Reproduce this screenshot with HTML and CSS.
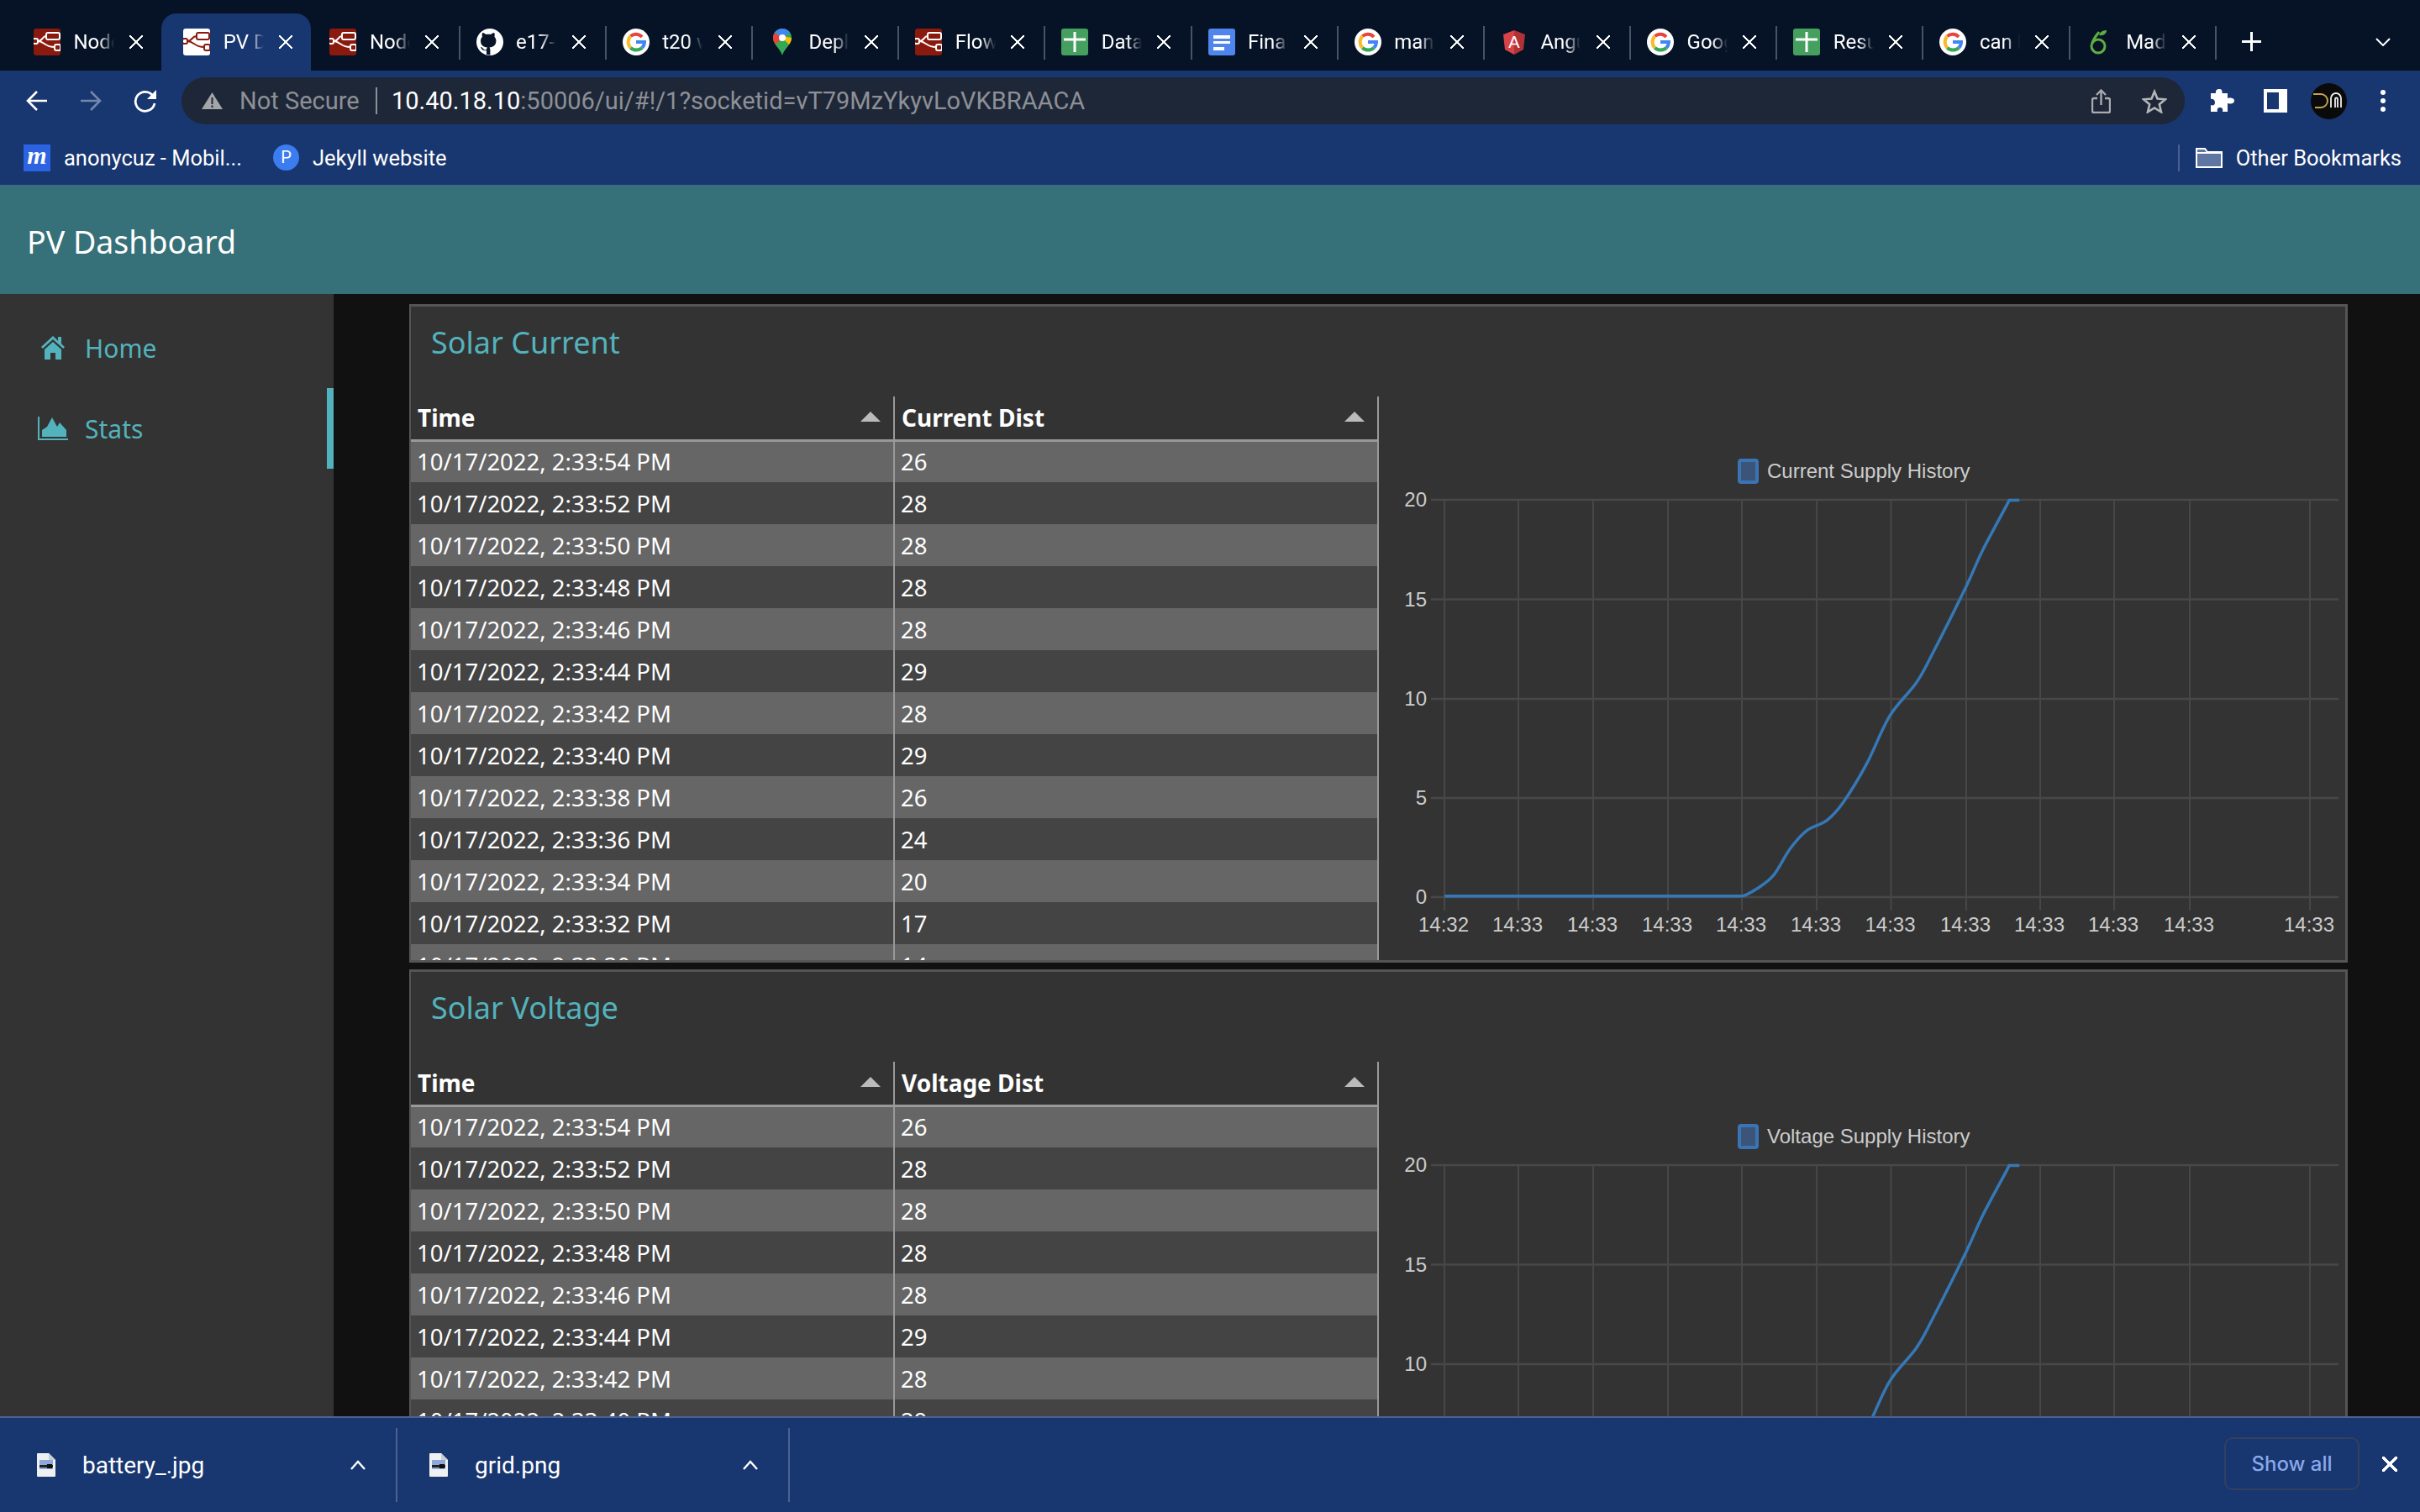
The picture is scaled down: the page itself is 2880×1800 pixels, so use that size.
FILE: index.html
```html
<!DOCTYPE html>
<html lang="en">
<head>
    <meta charset="UTF-8">
    <title>PV Dashboard</title>
    <link rel="stylesheet" href="styles.css">
</head>
<body>
<svg class="defs" width="0" height="0">
    <symbol id="ico-red" viewBox="0 0 32 32">
        <rect width="32" height="32" rx="3" fill="#8a1a0e"/>
        <g fill="none" stroke="#fff" stroke-width="2">
            <rect x="15" y="5" width="16" height="8" rx="2"/>
            <rect x="25" y="19" width="7" height="7" rx="2"/>
            <rect x="-1" y="12" width="6" height="6" rx="2"/>
            <path d="M5 15c6 0 5-6 10-6M5 15c8 0 8 7 20 7"/>
        </g>
    </symbol>
    <symbol id="ico-red-w" viewBox="0 0 32 32">
        <rect width="32" height="32" rx="3" fill="#fff"/>
        <g fill="none" stroke="#8a1a0e" stroke-width="2">
            <rect x="16" y="5" width="15" height="8" rx="2"/>
            <rect x="25" y="19" width="7" height="7" rx="2"/>
            <rect x="-1" y="12" width="6" height="6" rx="2"/>
            <path d="M5 15c6 0 5-6 11-6M5 15c8 0 8 7 20 7"/>
        </g>
    </symbol>
    <symbol id="ico-g" viewBox="0 0 32 32">
        <circle cx="16" cy="16" r="16" fill="#fff"/>
        <g fill="none" stroke-width="4">
            <path d="M23 10a10 10 0 0 0-13.500-1" stroke="#e8453c"/>
            <path d="M9.500 9a10 10 0 0 0 0 14" stroke="#f9bb2d"/>
            <path d="M9.500 23a10 10 0 0 0 13.500 0" stroke="#34a853"/>
            <path d="M23 23a10 10 0 0 0 3-7h-10" stroke="#4285f4"/>
        </g>
    </symbol>
    <symbol id="ico-sheet" viewBox="0 0 32 32">
        <rect width="32" height="32" rx="3" fill="#45a05f"/>
        <path d="M16 4v24M3 13h26" stroke="#fff" stroke-width="3"/>
    </symbol>
    <symbol id="ico-doc" viewBox="0 0 32 32">
        <rect width="32" height="32" rx="3" fill="#4f86ee"/>
        <path d="M6 8h20v4H6zM6 15h20v3H6zM6 22h13v4H6z" fill="#fff"/>
    </symbol>
    <symbol id="ico-file" viewBox="0 0 22 28">
        <path d="M1 0h13l8 8v19a1 1 0 0 1-1 1H1a1 1 0 0 1-1-1V1a1 1 0 0 1 1-1z" fill="#eef0f2"/>
        <path d="M14 0l8 8h-8z" fill="#c9ced4"/>
        <rect x="3" y="8" width="16" height="11" fill="#8fa8dc"/>
        <rect x="3" y="14" width="16" height="3" fill="#222"/>
        <rect x="12" y="13" width="6" height="5" fill="#111"/>
    </symbol>
</svg>

<div class="tabstrip">
    <div class="tab"><svg class="fav"><use href="#ico-red"/></svg><span class="tab-title">Node-RED</span><span class="tab-x"></span></div>
    <div class="tab active"><svg class="fav"><use href="#ico-red-w"/></svg><span class="tab-title">PV Dashboard</span><span class="tab-x"></span></div>
    <div class="tab sep"><svg class="fav"><use href="#ico-red"/></svg><span class="tab-title">Node-RED</span><span class="tab-x"></span></div>
    <div class="tab sep">
        <svg class="fav" viewBox="0 0 32 32"><circle cx="16" cy="16" r="16" fill="#fff"/><path d="M12 31v-5c-5 1-6-2-7-4 2 0 3 2 4 3 1 .500 2 .500 3 0 0-1 .500-2 1-2.500-4-.500-8-2-8-8 0-2 1-3.500 2-5-.500-1-.500-3 .200-4.500 2 0 3 1 4 2 2-.500 4-.500 6 0 1-1 2-2 4-2 .700 1.500 .700 3.500 .200 4.500 1 1.500 2 3 2 5 0 6-4 7.500-8 8 .700 .700 1 2 1 3v6z" fill="#0a1428"/></svg>
        <span class="tab-title">e17-co328</span><span class="tab-x"></span></div>
    <div class="tab sep"><svg class="fav"><use href="#ico-g"/></svg><span class="tab-title">t20 world</span><span class="tab-x"></span></div>
    <div class="tab sep">
        <svg class="fav" viewBox="0 0 32 32"><path d="M16 0C9 0 5 5 5 11c0 8 8 12 11 21 3-9 11-13 11-21C27 5 23 0 16 0z" fill="#34a853"/><path d="M7 5l9 6 9-6C23 2 20 0 16 0 12 0 9 2 7 5z" fill="#4285f4"/><path d="M5 11c0 3 1 5 3 8l8-8-9-6c-1 2-2 4-2 6z" fill="#ea4335"/><path d="M16 11l8 8c2-3 3-5 3-8l-11-2z" fill="#fbbc04"/><circle cx="16" cy="11" r="4" fill="#fff"/></svg>
        <span class="tab-title">Deploy</span><span class="tab-x"></span></div>
    <div class="tab sep"><svg class="fav"><use href="#ico-red"/></svg><span class="tab-title">Flows</span><span class="tab-x"></span></div>
    <div class="tab sep"><svg class="fav"><use href="#ico-sheet"/></svg><span class="tab-title">Database</span><span class="tab-x"></span></div>
    <div class="tab sep"><svg class="fav"><use href="#ico-doc"/></svg><span class="tab-title">Final report</span><span class="tab-x"></span></div>
    <div class="tab sep"><svg class="fav"><use href="#ico-g"/></svg><span class="tab-title">mangodb</span><span class="tab-x"></span></div>
    <div class="tab sep">
        <svg class="fav" viewBox="0 0 32 32"><path d="M16 2L3 7l2 18 11 6z" fill="#d84345"/><path d="M16 2l13 5-2 18-11 6z" fill="#b03237"/><text x="16" y="23" class="ng-a">A</text></svg>
        <span class="tab-title">Angular</span><span class="tab-x"></span></div>
    <div class="tab sep"><svg class="fav"><use href="#ico-g"/></svg><span class="tab-title">Google</span><span class="tab-x"></span></div>
    <div class="tab sep"><svg class="fav"><use href="#ico-sheet"/></svg><span class="tab-title">Results</span><span class="tab-x"></span></div>
    <div class="tab sep"><svg class="fav"><use href="#ico-g"/></svg><span class="tab-title">can bus</span><span class="tab-x"></span></div>
    <div class="tab sep">
        <svg class="fav" viewBox="0 0 32 32"><g fill="none" stroke="#5fae43" stroke-width="3"><circle cx="14" cy="21" r="8"/><path d="M7 17c2-6 6-10 8-13"/></g><path d="M15 8c1-4 5-6 9-6 0 4-4 7-9 6z" fill="#5fae43"/></svg>
        <span class="tab-title">Madgwick</span><span class="tab-x"></span></div>
    <span class="tab-plus"></span>
    <svg class="tab-more" viewBox="0 0 18 10"><path d="M1 1l8 8 8-8" fill="none" stroke="#fff" stroke-width="2"/></svg>
</div>

<div class="toolbar">
    <svg class="nav-btn" viewBox="0 0 26 26"><path d="M25 13H3M13 2L2 13l11 11" fill="none" stroke="#fff" stroke-width="2.600"/></svg>
    <svg class="nav-btn" viewBox="0 0 26 26"><path d="M1 13h22M13 2l11 11-11 11" fill="none" stroke="#7487ab" stroke-width="2.600"/></svg>
    <svg class="nav-btn reload" viewBox="0 0 28 28"><path d="M23 8a11.500 11.500 0 1 0 2 9" fill="none" stroke="#fff" stroke-width="2.800"/><path d="M27 1v11H16z" fill="#fff"/></svg>
    <div class="omnibox">
        <svg class="warn" viewBox="0 0 25 20"><path d="M12.500 0L25 20H0z" fill="#a3a5a9"/><path d="M11.500 6h2v8h-2zM11.500 15.500h2v2.500h-2z" fill="#1e2738"/></svg>
        <span class="not-secure">Not Secure</span>
        <span class="omni-sep"></span>
        <span class="url"><b>10.40.18.10</b>:50006/ui/#!/1?socketid=vT79MzYkyvLoVKBRAACA</span>
        <svg class="share" viewBox="0 0 23 29"><path d="M7 11H3a2 2 0 0 0-2 2v13a2 2 0 0 0 2 2h17a2 2 0 0 0 2-2V13a2 2 0 0 0-2-2h-4M11.500 19V2M6 7l5.500-5.500L17 7" fill="none" stroke="#a9abae" stroke-width="2.400"/></svg>
        <svg class="star" viewBox="0 0 30 29"><path d="M15 3l3.500 8.500 9.500.8-7.200 6 2.200 9L15 22.400 7 27.300l2.200-9-7.200-6 9.500-.8z" fill="none" stroke="#b5b6b8" stroke-width="2.600"/></svg>
    </div>
    <svg class="puzzle" viewBox="0 0 29 28"><path d="M11 0c3 0 4 2 3.500 5H21v6c3-1 8-.500 8 3s-5 4-8 3v10h-6c1-4-1-5-3-5s-4 1-3 5H1v-8c3 1 5 0 5-3S3.500 11 1 12V5h6C6.500 2 8 0 11 0z" fill="#fff"/></svg>
    <span class="sidepanel"></span>
    <svg class="avatar" viewBox="0 0 43 43"><circle cx="21.500" cy="21.500" r="21.500" fill="#0a0a0a"/><path d="M3 13h9a8 8 0 0 1 0 16H5" fill="none" stroke="#c2a24e" stroke-width="2"/><path d="M24 29V18a6 6 0 0 1 12 0v11M29 29V19a1.500 1.500 0 0 1 3 0v10" fill="none" stroke="#eee" stroke-width="1.800"/></svg>
    <span class="dots"><i></i><i></i><i></i></span>
</div>

<div class="bookmarks">
    <span class="bm-m">m</span>
    <span class="bm-text first">anonycuz - Mobil...</span>
    <span class="bm-p">P</span>
    <span class="bm-text">Jekyll website</span>
    <span class="bm-sep"></span>
    <svg class="folder" viewBox="0 0 32 24"><path d="M1 23V1h10l3 4h17v18z" fill="#5f76a3" stroke="#fff" stroke-width="2"/><path d="M1 6h30" stroke="#fff" stroke-width="2"/></svg>
    <span class="bm-text">Other Bookmarks</span>
</div>

<header class="app-header">PV Dashboard</header>

<div class="app-body">
    <nav class="sidebar">
        <a class="nav-item">
            <svg class="nav-ico" viewBox="0 0 36 28"><path d="M18 0L4 13l1.800 2L18 4l12.200 11 1.800-2-4-3.700V1h-4v4.700zM18 7L8 16v12h7v-8h6v8h7V16z" fill="#53b3bd"/></svg>
            <span>Home</span>
        </a>
        <a class="nav-item current">
            <svg class="nav-ico" viewBox="0 0 36 28"><path d="M0 0h2v26h34v2H0z" fill="#53b3bd"/><path d="M5 24V16l6-4 6-11 6 11 3-5 8 9v8z" fill="#53b3bd"/></svg>
            <span>Stats</span>
        </a>
    </nav>
    <main class="content">
        <section class="panel">
            <h2 class="panel-title">Solar Current</h2>
            <div class="panel-body">
                <table class="data">
                    <thead><tr><th>Time<i class="caret"></i></th><th>Current Dist<i class="caret"></i></th></tr></thead>
                    <tbody>
                        <tr><td>10/17/2022, 2:33:54 PM</td><td>26</td></tr>
                        <tr><td>10/17/2022, 2:33:52 PM</td><td>28</td></tr>
                        <tr><td>10/17/2022, 2:33:50 PM</td><td>28</td></tr>
                        <tr><td>10/17/2022, 2:33:48 PM</td><td>28</td></tr>
                        <tr><td>10/17/2022, 2:33:46 PM</td><td>28</td></tr>
                        <tr><td>10/17/2022, 2:33:44 PM</td><td>29</td></tr>
                        <tr><td>10/17/2022, 2:33:42 PM</td><td>28</td></tr>
                        <tr><td>10/17/2022, 2:33:40 PM</td><td>29</td></tr>
                        <tr><td>10/17/2022, 2:33:38 PM</td><td>26</td></tr>
                        <tr><td>10/17/2022, 2:33:36 PM</td><td>24</td></tr>
                        <tr><td>10/17/2022, 2:33:34 PM</td><td>20</td></tr>
                        <tr><td>10/17/2022, 2:33:32 PM</td><td>17</td></tr>
                        <tr><td>10/17/2022, 2:33:30 PM</td><td>14</td></tr>
                    </tbody>
                </table>
                <svg class="chart" viewBox="0 0 1149 669">
                    <rect class="legend-box" x="429" y="76" width="21" height="26" rx="2"/>
                    <text class="legend" x="462" y="97">Current Supply History</text>
                    <path class="grid" d="M62 123H1142M62 241.500H1142M62 360H1142M62 478H1142M62 596H1142"/>
                    <path class="grid-v" d="M78 123V612M166 123V612M255 123V612M344 123V612M432 123V612M521 123V612M609.500 123V612M699 123V612M787 123V612M875 123V612M965 123V612M1108 123V612"/>
                    <g class="ticks-y">
                        <text x="57" y="131">20</text><text x="57" y="250">15</text><text x="57" y="368">10</text><text x="57" y="486">5</text><text x="57" y="604">0</text>
                    </g>
                    <g class="ticks-x">
                        <text x="77" y="637">14:32</text><text x="165" y="637">14:33</text><text x="254" y="637">14:33</text><text x="343" y="637">14:33</text><text x="431" y="637">14:33</text><text x="520" y="637">14:33</text><text x="608.500" y="637">14:33</text><text x="698" y="637">14:33</text><text x="786" y="637">14:33</text><text x="874" y="637">14:33</text><text x="964" y="637">14:33</text><text x="1107" y="637">14:33</text>
                    </g>
                    <path class="curve" d="M78 594.700H431.600C434.600 594.700 443.500 590.100 449.800 586C456.100 581.900 462.900 578.100 469.500 570.200C476.100 562.300 482.700 547.400 489.300 538.500C495.900 529.600 501.850 522.400 509.100 516.800C516.350 511.200 525.550 510.500 532.800 504.900C540.050 499.300 544.700 494.400 552.600 483.200C560.500 472 571.100 454.800 580.300 437.700C589.500 420.600 598 396.600 607.900 380.400C617.800 364.200 631 353.300 639.600 340.800C648.200 328.300 649.400 324.300 659.300 305.200C669.200 286.100 689 246.600 698.900 226.200C708.800 205.800 710.100 199.800 718.700 182.700C727.300 165.600 745.300 133.400 750.300 123.400H762.200"/>
                </svg>
            </div>
        </section>
        <section class="panel">
            <h2 class="panel-title">Solar Voltage</h2>
            <div class="panel-body">
                <table class="data">
                    <thead><tr><th>Time<i class="caret"></i></th><th>Voltage Dist<i class="caret"></i></th></tr></thead>
                    <tbody>
                        <tr><td>10/17/2022, 2:33:54 PM</td><td>26</td></tr>
                        <tr><td>10/17/2022, 2:33:52 PM</td><td>28</td></tr>
                        <tr><td>10/17/2022, 2:33:50 PM</td><td>28</td></tr>
                        <tr><td>10/17/2022, 2:33:48 PM</td><td>28</td></tr>
                        <tr><td>10/17/2022, 2:33:46 PM</td><td>28</td></tr>
                        <tr><td>10/17/2022, 2:33:44 PM</td><td>29</td></tr>
                        <tr><td>10/17/2022, 2:33:42 PM</td><td>28</td></tr>
                        <tr><td>10/17/2022, 2:33:40 PM</td><td>29</td></tr>
                    </tbody>
                </table>
                <svg class="chart" viewBox="0 0 1149 669">
                    <rect class="legend-box" x="429" y="76" width="21" height="26" rx="2"/>
                    <text class="legend" x="462" y="97">Voltage Supply History</text>
                    <path class="grid" d="M62 123H1142M62 241.500H1142M62 360H1142M62 478H1142M62 596H1142"/>
                    <path class="grid-v" d="M78 123V612M166 123V612M255 123V612M344 123V612M432 123V612M521 123V612M609.500 123V612M699 123V612M787 123V612M875 123V612M965 123V612M1108 123V612"/>
                    <g class="ticks-y">
                        <text x="57" y="131">20</text><text x="57" y="250">15</text><text x="57" y="368">10</text><text x="57" y="486">5</text><text x="57" y="604">0</text>
                    </g>
                    <path class="curve" d="M78 594.700H431.600C434.600 594.700 443.500 590.100 449.800 586C456.100 581.900 462.900 578.100 469.500 570.200C476.100 562.300 482.700 547.400 489.300 538.500C495.900 529.600 501.850 522.400 509.100 516.800C516.350 511.200 525.550 510.500 532.800 504.900C540.050 499.300 544.700 494.400 552.600 483.200C560.500 472 571.100 454.800 580.300 437.700C589.500 420.600 598 396.600 607.900 380.400C617.800 364.200 631 353.300 639.600 340.800C648.200 328.300 649.400 324.300 659.300 305.200C669.200 286.100 689 246.600 698.900 226.200C708.800 205.800 710.100 199.800 718.700 182.700C727.300 165.600 745.300 133.400 750.300 123.400H762.200"/>
                </svg>
            </div>
        </section>
    </main>
</div>

<div class="downloads">
    <div class="dl-item">
        <svg class="dl-file"><use href="#ico-file"/></svg>
        <span class="dl-name">battery_.jpg</span>
        <svg class="dl-chev" viewBox="0 0 20 12"><path d="M2 11l8-9 8 9" fill="none" stroke="#fff" stroke-width="2.400"/></svg>
    </div>
    <div class="dl-item">
        <svg class="dl-file"><use href="#ico-file"/></svg>
        <span class="dl-name">grid.png</span>
        <svg class="dl-chev" viewBox="0 0 20 12"><path d="M2 11l8-9 8 9" fill="none" stroke="#fff" stroke-width="2.400"/></svg>
    </div>
    <span class="show-all">Show all</span>
    <span class="dl-close"></span>
</div>
</body>
</html>
```

FILE: styles.css
```css
*{
    box-sizing: border-box;
}
html,body{
    height: 100%;
}
body{
    margin: 0;
    display: flex;
    flex-direction: column;
    height: 1800px;
    overflow: hidden;
    background: #111;
    color: #fff;
    font-family: Roboto, "Liberation Sans", sans-serif;
}
.defs{
    position: absolute;
}

/* browser tabs */
.tabstrip{
    flex: none;
    display: flex;
    height: 84px;
    padding: 16px 0 0 24px;
    background: #061226;
}
.tab{
    position: relative;
    flex: none;
    display: flex;
    align-items: center;
    width: 174.2px;
    height: 68px;
    padding-left: 20px;
    font-size: 24px;
}
.tab:first-child{
    width: 178.2px;
    margin-left: -4px;
}
.tab.sep::after{
    content: "";
    position: absolute;
    right: -1px;
    top: 15px;
    width: 2px;
    height: 40px;
    background: #48536a;
}
.tab.active::before{
    content: "";
    position: absolute;
    left: -6px;
    right: 2px;
    top: 0;
    bottom: 0;
    background: #18366f;
    border-radius: 18px 18px 0 0;
    box-shadow: -10px 14px 0 -10px #18366f, 10px 14px 0 -10px #18366f;
}
.fav{
    position: relative;
    flex: none;
    width: 32px;
    height: 32px;
}
.tab-title{
    position: relative;
    width: 50px;
    margin-left: 15.5px;
    overflow: hidden;
    white-space: nowrap;
    -webkit-mask-image: linear-gradient(90deg, #000 60%, transparent 96%);
    mask-image: linear-gradient(90deg, #000 60%, transparent 96%);
}
.tab-x,.dl-close{
    position: relative;
    flex: none;
    width: 16px;
    height: 16px;
    margin-left: 16.500px;
    background:
        linear-gradient(45deg, transparent 44%, #fff 44%, #fff 56%, transparent 56%),
        linear-gradient(-45deg, transparent 44%, #fff 44%, #fff 56%, transparent 56%);
}
.tab-plus{
    flex: none;
    width: 23px;
    height: 23px;
    margin: 22px 0 0 31px;
    background:
        linear-gradient(#fff, #fff) center/3px 100% no-repeat,
        linear-gradient(#fff, #fff) center/100% 3px no-repeat;
}
.tab-more{
    flex: none;
    width: 18px;
    height: 10px;
    margin: 29px 0 0 136px;
}
.ng-a{
    fill: #fff;
    font: 20px "Liberation Sans", sans-serif;
    text-anchor: middle;
}

/* toolbar */
.toolbar{
    flex: none;
    display: flex;
    align-items: center;
    height: 72px;
    padding-left: 31px;
    background: #18366f;
}
.nav-btn{
    flex: none;
    width: 26px;
    height: 26px;
    margin-right: 38px;
}
.reload{
    width: 28px;
    height: 28px;
    margin-right: 29px;
}
.omnibox{
    flex: none;
    display: flex;
    align-items: center;
    width: 2384px;
    height: 56px;
    padding: 0 21px 0 24px;
    border-radius: 28px;
    background: #1e2738;
    font-size: 29px;
    color: #8d9096;
}
.warn{
    width: 25px;
    height: 20px;
    margin-right: 20px;
}
.not-secure{
    width: 145px;
    white-space: nowrap;
}
.omni-sep{
    width: 2px;
    height: 32px;
    margin: 0 17px 0 17px;
    background: #8d9096;
}
.url b{
    font-weight: 400;
    color: #fff;
}
.share{
    width: 23px;
    height: 29px;
    margin-left: auto;
}
.star{
    width: 30px;
    height: 29px;
    margin-left: 37px;
}
.puzzle{
    flex: none;
    width: 29px;
    height: 28px;
    margin-left: 30px;
}
.sidepanel{
    flex: none;
    width: 28px;
    height: 28px;
    margin-left: 35px;
    border: solid #fff;
    border-width: 4px 10px 4px 4px;
}
.avatar{
    flex: none;
    width: 43px;
    height: 43px;
    margin-left: 28px;
}
.dots{
    display: flex;
    flex-direction: column;
    gap: 4px;
    margin-left: 37px;
}
.dots i{
    width: 6px;
    height: 6px;
    margin: 0 3px;
    border-radius: 50%;
    background: #fff;
}

/* bookmarks */
.bookmarks{
    flex: none;
    display: flex;
    align-items: center;
    height: 65px;
    padding: 0 22px 1px 28px;
    background: #18366f;
    border-bottom: 1px solid #4a6291;
}
.bm-m{
    width: 32px;
    height: 32px;
    background: #2b63e3;
    color: #fff;
    text-align: center;
    font: italic bold 30px/26px "Liberation Serif", serif;
}
.bm-text{
    margin-left: 16px;
    font-size: 25.500px;
    white-space: nowrap;
}
.bm-text.first{
    width: 213px;
}
.bm-p{
    width: 31px;
    height: 31px;
    margin-left: 36px;
    border-radius: 50%;
    background: #3b7cf0;
    text-align: center;
    font-size: 20px;
    line-height: 31px;
}
.bm-sep{
    width: 2px;
    height: 32px;
    margin-left: auto;
    background: #4a6291;
}
.folder{
    width: 32px;
    height: 24px;
    margin-left: 19px;
}

/* dashboard */
.app-header{
    flex: none;
    height: 129px;
    padding-left: 32px;
    background: #367078;
    font: 37.500px/133px "Noto Sans", sans-serif;
}
.app-body{
    flex: 1;
    display: flex;
    min-height: 0;
}
.sidebar{
    flex: none;
    width: 397px;
    padding-top: 16px;
    background: #333;
}
.nav-item{
    display: flex;
    align-items: center;
    gap: 20px;
    height: 96px;
    padding-left: 45px;
    color: #53b3bd;
    font: 30px "Noto Sans", sans-serif;
}
.nav-item.current{
    border-right: 8px solid #53b3bd;
}
.nav-ico{
    width: 36px;
    height: 28px;
}
.content{
    flex: 1;
    min-width: 0;
    padding: 12px 0 0 90px;
    overflow: hidden;
    font-family: "Noto Sans", sans-serif;
}
.panel{
    display: flex;
    flex-direction: column;
    width: 2307px;
    height: 784px;
    margin-bottom: 8px;
    border: 3px solid #555;
    border-left-width: 2px;
    background: #333;
}
.panel-title{
    flex: none;
    height: 107px;
    margin: 0;
    padding-left: 24px;
    color: #53b3bd;
    font-size: 36px;
    font-weight: 400;
    line-height: 86px;
}
.panel-body{
    flex: 1;
    display: flex;
    min-height: 0;
    overflow: hidden;
}
.data{
    flex: none;
    align-self: flex-start;
    width: 1152px;
    table-layout: fixed;
    border-collapse: collapse;
    font-size: 27.500px;
}
.data th,.data td{
    position: relative;
    height: 50px;
    padding: 0 8px;
    text-align: left;
    white-space: nowrap;
    border-left: 2px solid #999;
    border-right: 2px solid #999;
}
.data td{
    padding-left: 7px;
}
.data th:first-child,.data td:first-child{
    width: 575px;
    border-left: 0;
}
.data th{
    height: 52px;
    border-bottom: 3px solid #999;
    font-size: 28px;
    font-weight: 700;
}
.data tbody tr:nth-child(odd){
    background: #666;
}
.data tbody tr:nth-child(even){
    background: #444;
}
.caret{
    position: absolute;
    right: 15px;
    top: 18px;
    border: 12px solid transparent;
    border-top: 0;
    border-bottom: 12px solid #bbb;
}
.chart{
    flex: none;
    width: 1149px;
    height: 669px;
}
.chart text{
    font-family: "Liberation Sans", Arial, sans-serif;
    font-size: 24px;
    fill: #ccc;
}
.legend-box{
    fill: #3b5478;
    stroke: #3a74b4;
    stroke-width: 4;
}
.grid{
    fill: none;
    stroke: #484848;
    stroke-width: 2.500;
}
.grid-v{
    fill: none;
    stroke: #474747;
    stroke-width: 2;
}
.ticks-y text{
    text-anchor: end;
}
.ticks-x text{
    text-anchor: middle;
}
.curve{
    fill: none;
    stroke: #3578b8;
    stroke-width: 3.500;
}

/* downloads bar */
.downloads{
    flex: none;
    display: flex;
    align-items: center;
    height: 114px;
    padding: 0 27px 0 6px;
    background: #18366f;
    border-top: 2px solid #4a6291;
}
.dl-item{
    display: flex;
    align-items: center;
    width: 467px;
    height: 88px;
    padding: 0 35px 0 38px;
    border-right: 2px solid #4a6291;
}
.dl-file{
    flex: none;
    width: 22px;
    height: 28px;
}
.dl-name{
    margin-left: 32px;
    font-size: 28px;
}
.dl-chev{
    width: 20px;
    height: 12px;
    margin-left: auto;
}
.show-all{
    width: 161px;
    height: 63px;
    margin-left: auto;
    margin-bottom: 3px;
    border: 2px solid #33415f;
    border-radius: 10px;
    color: #8aa9ea;
    text-align: center;
    font: 500 24px/59px Inter, sans-serif;
}
.dl-close{
    width: 18px;
    height: 18px;
    margin-left: 27px;
    margin-bottom: 3px;
}
```
